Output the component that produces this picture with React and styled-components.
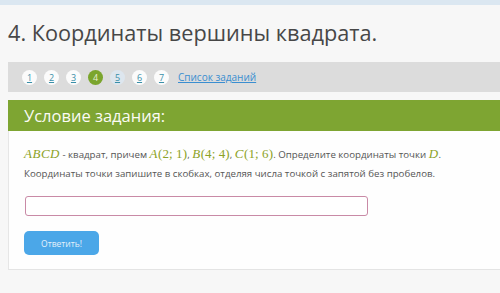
import React from "react";
import styled, { createGlobalStyle } from "styled-components";

const Global = createGlobalStyle`
  html, body { margin: 0; padding: 0; background: #f7f7f7; }
  body { font-family: "Open Sans", "Liberation Sans", sans-serif; overflow: hidden; }
`;

const Page = styled.div`
  width: 500px;
  height: 293px;
  display: flex;
  flex-direction: column;
`;

const TopStrip = styled.div`
  height: 5px;
  background: #dbe7f1;
`;

const Main = styled.div`
  padding-left: 8px;
  display: flex;
  flex-direction: column;
`;

const Title = styled.h1`
  margin: 0;
  padding-top: 14px;
  height: 43px;
  box-sizing: border-box;
  font-size: 21.7px;
  font-weight: 400;
  color: #474747;
  line-height: 28px;
  white-space: nowrap;
`;

const NavBar = styled.div`
  margin-top: 14px;
  height: 30px;
  background: #dcdcdc;
  display: flex;
  align-items: center;
  padding-left: 14px;
  gap: 7px;
`;

const Circle = styled.a`
  width: 15px;
  height: 15px;
  border-radius: 50%;
  background: ${(p) => (p.$active ? "#7ba52d" : p.$visited ? "#dde6ee" : "#fbfbfb")};
  color: ${(p) => (p.$active ? "#e8f0d8" : "#3a8fa8")};
  font-size: 9px;
  text-decoration: ${(p) => (p.$active ? "none" : "underline")};
  display: flex;
  align-items: center;
  justify-content: center;
  line-height: 1;
`;

const ListLink = styled.a`
  margin-left: 2px;
  font-size: 10px;
  color: #3a8ed0;
  text-decoration: underline;
`;

const Card = styled.div`
  margin-top: 8px;
  display: flex;
  flex-direction: column;
`;

const CardHeader = styled.div`
  height: 31px;
  background: #7ea532;
  color: #fbfbf5;
  font-size: 16.5px;
  display: flex;
  align-items: center;
  padding-left: 16px;
`;

const CardBody = styled.div`
  background: #fefefe;
  border-left: 1px solid #e6e6e6;
  border-bottom: 1px solid #e4e4e4;
  height: 139px;
  box-sizing: border-box;
  padding: 13px 0 0 15px;
  display: flex;
  flex-direction: column;
  align-items: flex-start;
`;

const Line = styled.p`
  margin: 0;
  font-size: 9.7px;
  color: #555;
  line-height: 19px;
  white-space: nowrap;
`;

const M = styled.span`
  font-family: "Liberation Serif", "DejaVu Serif", serif;
  font-size: 13px;
  color: #8ca226;
  font-style: ${(p) => (p.$up ? "normal" : "italic")};
  letter-spacing: ${(p) => (p.$up ? "0.1px" : "0.5px")};
`;

const Input = styled.div`
  margin-top: 13px;
  margin-left: 1px;
  width: 343px;
  height: 20px;
  box-sizing: border-box;
  border: 1px solid #c98aa6;
  border-radius: 3px;
  background: #fff;
`;

const Button = styled.div`
  margin-top: 15px;
  width: 75px;
  height: 24px;
  border-radius: 5px;
  background: #4ba7e8;
  color: #e4f1fb;
  font-size: 8.5px;
  display: flex;
  align-items: center;
  justify-content: center;
`;

function Pt({ n, a }) {
  return (
    <>
      <M>{n}</M>
      <M $up>({a})</M>
    </>
  );
}

export default function App() {
  const nums = [1, 2, 3, 4, 5, 6, 7];
  return (
    <Page>
      <Global />
      <TopStrip />
      <Main>
        <Title>4. Координаты вершины квадрата.</Title>
        <NavBar>
          {nums.map((n) => (
            <Circle key={n} $active={n === 4} $visited={n === 5}>
              {n}
            </Circle>
          ))}
          <ListLink>Список заданий</ListLink>
        </NavBar>
        <Card>
          <CardHeader>Условие задания:</CardHeader>
          <CardBody>
            <Line>
              <M>ABCD</M> - квадрат, причем <Pt n="A" a="2; 1" />,{" "}
              <Pt n="B" a="4; 4" />, <Pt n="C" a="1; 6" />. Определите
              координаты точки <M>D</M>.
            </Line>
            <Line>
              Координаты точки запишите в скобках, отделяя числа точкой с
              запятой без пробелов.
            </Line>
            <Input />
            <Button>Ответить!</Button>
          </CardBody>
        </Card>
      </Main>
    </Page>
  );
}
